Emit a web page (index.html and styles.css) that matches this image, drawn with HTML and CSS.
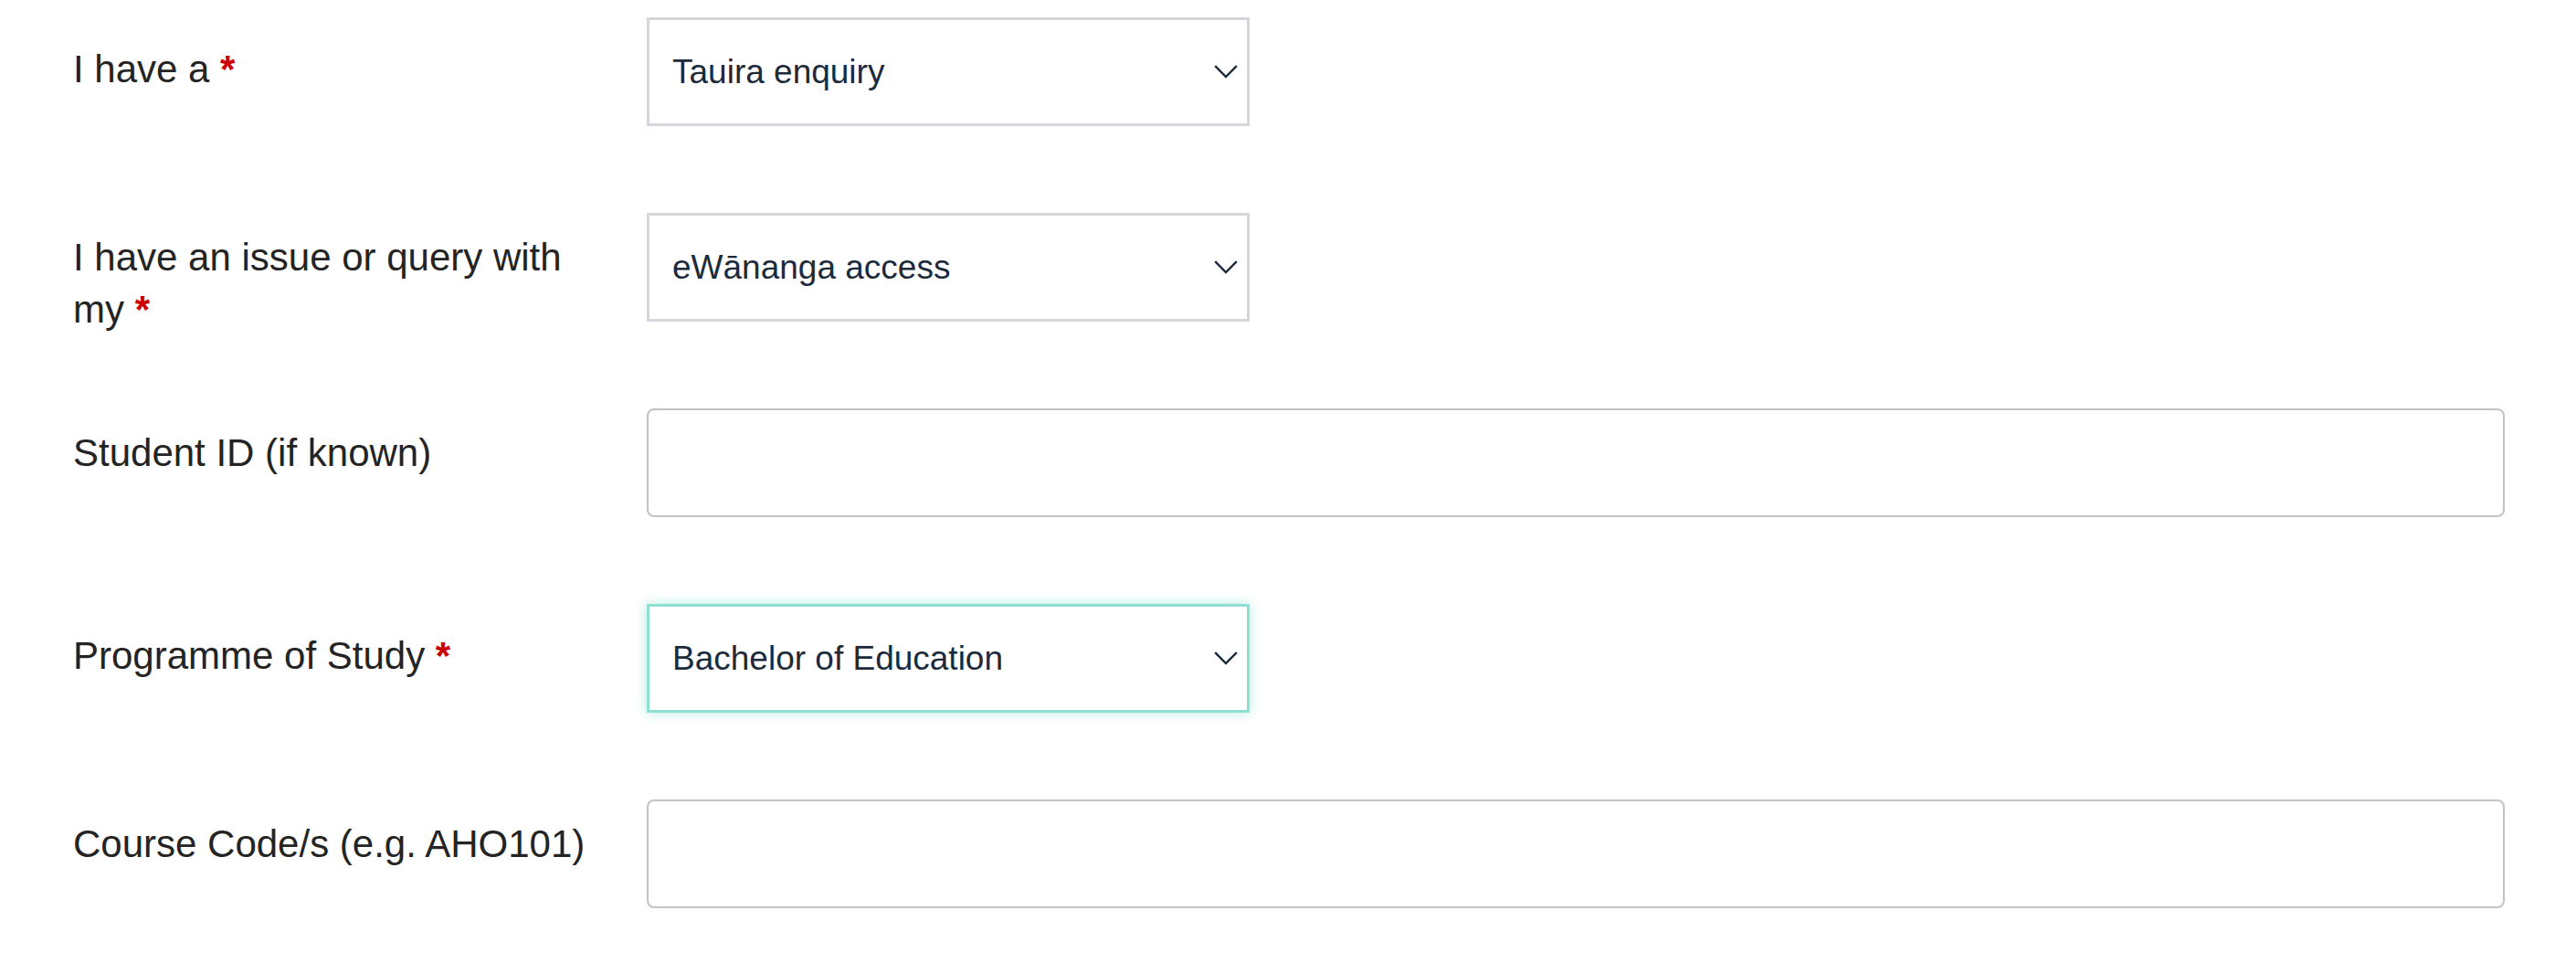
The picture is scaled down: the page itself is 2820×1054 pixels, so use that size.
FILE: index.html
```html
<!DOCTYPE html>
<html lang="en">
<head>
<meta charset="utf-8">
<title>Enquiry form</title>
<link rel="stylesheet" href="styles.css">
</head>
<body>
<form class="form">
  <div class="row">
    <label class="label label--low">I have a <span class="req">*</span></label>
    <div class="select-wrap">
      <select class="select"><option>Tauira enquiry</option></select>
      <svg class="chev" viewBox="0 0 26 15" width="26" height="15"><polyline points="1.2,1.2 13,13 24.8,1.2" fill="none" stroke="#1b2b3c" stroke-width="2.4"/></svg>
    </div>
  </div>
  <div class="row">
    <label class="label"><span class="line">I have an issue or query with</span><span class="line">my <span class="req">*</span></span></label>
    <div class="select-wrap">
      <select class="select"><option>eWānanga access</option></select>
      <svg class="chev" viewBox="0 0 26 15" width="26" height="15"><polyline points="1.2,1.2 13,13 24.8,1.2" fill="none" stroke="#1b2b3c" stroke-width="2.4"/></svg>
    </div>
  </div>
  <div class="row">
    <label class="label">Student ID (if known)</label>
    <input class="input" type="text">
  </div>
  <div class="row">
    <label class="label label--low">Programme of Study <span class="req">*</span></label>
    <div class="select-wrap">
      <select class="select select--focus"><option>Bachelor of Education</option></select>
      <svg class="chev" viewBox="0 0 26 15" width="26" height="15"><polyline points="1.2,1.2 13,13 24.8,1.2" fill="none" stroke="#1b2b3c" stroke-width="2.4"/></svg>
    </div>
  </div>
  <div class="row">
    <label class="label">Course Code/s (e.g. AHO101)</label>
    <input class="input" type="text">
  </div>
</form>
</body>
</html>
```

FILE: styles.css
```css
html, body {
  margin: 0;
  padding: 0;
  background: #ffffff;
}

body {
  font-family: "Liberation Sans", Arial, Helvetica, sans-serif;
  color: #242424;
}

.form {
  display: flex;
  flex-direction: column;
  gap: 95px;
  padding: 19px 0 0 80px;
}

.row {
  display: flex;
  align-items: flex-start;
  height: 119px;
}

.label {
  flex: none;
  width: 580px;
  margin-right: 48px;
  padding-top: 20px;
  font-size: 42px;
  line-height: 57px;
  color: #242424;
}

.label--low {
  padding-top: 28px;
}

.line {
  display: block;
}

.req {
  color: #cc0000;
  font-weight: bold;
}

.select-wrap {
  position: relative;
  width: 660px;
  height: 119px;
  flex: none;
}

.select {
  -webkit-appearance: none;
  appearance: none;
  box-sizing: border-box;
  width: 660px;
  height: 119px;
  margin: 0;
  padding: 0 60px 0 25px;
  border: 3px solid #d3d7db;
  border-radius: 0;
  background: #ffffff;
  font-family: "Liberation Sans", Arial, Helvetica, sans-serif;
  font-size: 37px;
  color: #1b2b3c;
  outline: none;
}

.select--focus {
  border-color: #8fe0d3;
  box-shadow: 0 0 12px rgba(130, 222, 205, 0.6);
}

.chev {
  position: absolute;
  right: 13px;
  top: 52px;
  pointer-events: none;
}

.input {
  box-sizing: border-box;
  flex: none;
  width: 2034px;
  height: 119px;
  margin: 0;
  padding: 0 25px;
  border: 2.5px solid #c3c3c3;
  border-radius: 8px;
  background: #ffffff;
  font-family: "Liberation Sans", Arial, Helvetica, sans-serif;
  font-size: 37px;
  color: #1b2b3c;
  outline: none;
}
```
